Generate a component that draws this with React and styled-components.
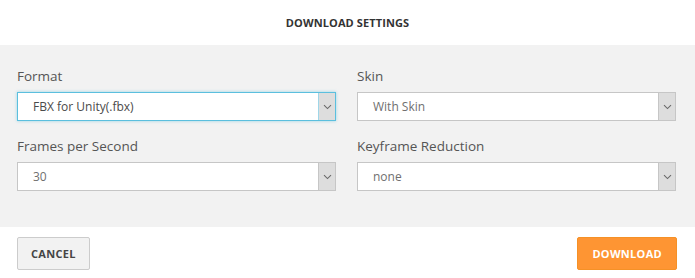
import React from "react";
import styled, { createGlobalStyle } from "styled-components";

const GlobalStyle = createGlobalStyle`
  html, body {
    margin: 0;
    padding: 0;
    background: #ffffff;
    font-family: "Open Sans", "DejaVu Sans", sans-serif;
  }
`;

const FIELDS = [
  { id: "format", label: "Format", value: "FBX for Unity(.fbx)", focused: true },
  { id: "skin", label: "Skin", value: "With Skin" },
  { id: "fps", label: "Frames per Second", value: "30" },
  { id: "reduction", label: "Keyframe Reduction", value: "none" },
];

const Chevron = () => (
  <svg width="9" height="6" viewBox="0 0 9 6" fill="none">
    <path d="M1 1.2 L4.5 4.6 L8 1.2" stroke="#6a6a6a" strokeWidth="1.1" />
  </svg>
);

const App = () => {
  return (
    <>
      <GlobalStyle />
      <Dialog>
        <Header>
          <Title>Download Settings</Title>
        </Header>
        <Body>
          {FIELDS.map((field) => (
            <Field key={field.id}>
              <Label htmlFor={field.id}>{field.label}</Label>
              <SelectBox $focused={field.focused}>
                <Value id={field.id} $strong={field.focused}>
                  {field.value}
                </Value>
                <ArrowBox $focused={field.focused}>
                  <Chevron />
                </ArrowBox>
              </SelectBox>
            </Field>
          ))}
        </Body>
        <Footer>
          <Button>Cancel</Button>
          <Button $primary>Download</Button>
        </Footer>
      </Dialog>
    </>
  );
};

const Dialog = styled.div`
  width: 695px;
  height: 278px;
  display: flex;
  flex-direction: column;
  background: #ffffff;
`;

const Header = styled.header`
  height: 45px;
  display: flex;
  align-items: center;
  justify-content: center;
  padding-bottom: 1px;
  box-sizing: border-box;
`;

const Title = styled.h1`
  margin: 0;
  font-size: 11px;
  font-weight: 700;
  text-transform: uppercase;
  letter-spacing: 0.1px;
  color: #333333;
`;

const Body = styled.main`
  background: #f2f2f2;
  display: grid;
  grid-template-columns: 1fr 1fr;
  column-gap: 21px;
  row-gap: 18px;
  padding: 24px 19px 36px 17px;
  align-content: start;
  height: 182px;
  box-sizing: border-box;
`;

const Field = styled.div`
  display: flex;
  flex-direction: column;
  gap: 9px;
`;

const Label = styled.label`
  font-size: 13.5px;
  line-height: 14px;
  color: #555555;
`;

const SelectBox = styled.div`
  height: 29px;
  box-sizing: border-box;
  display: flex;
  background: #ffffff;
  border: 1px solid ${(p) => (p.$focused ? "#5bbfde" : "#c6c6c6")};
  box-shadow: ${(p) => (p.$focused ? "0 0 3px rgba(91, 191, 222, 0.6)" : "none")};
`;

const Value = styled.div`
  flex: 1;
  display: flex;
  align-items: center;
  padding-left: 15px;
  font-size: 12px;
  color: ${(p) => (p.$strong ? "#4a4a4a" : "#6f6f6f")};
`;

const ArrowBox = styled.div`
  width: 16px;
  display: flex;
  align-items: center;
  justify-content: center;
  background: #dddddd;
  border-left: 1px solid ${(p) => (p.$focused ? "#9fd6e8" : "#c6c6c6")};
`;

const Footer = styled.footer`
  flex: 1;
  display: flex;
  justify-content: space-between;
  align-items: flex-start;
  padding: 10px 18px 0 17px;
`;

const Button = styled.button`
  height: 33px;
  padding: 0 ${(p) => (p.$primary ? "14px" : "13px")};
  border: 1px solid ${(p) => (p.$primary ? "#f59127" : "#cccccc")};
  border-radius: 2px;
  background: ${(p) => (p.$primary ? "#fe9533" : "#f2f2f2")};
  color: ${(p) => (p.$primary ? "#ffffff" : "#454545")};
  font-family: inherit;
  font-size: 11px;
  font-weight: 700;
  text-transform: uppercase;
  letter-spacing: 0.3px;
  cursor: pointer;
`;

export default App;
